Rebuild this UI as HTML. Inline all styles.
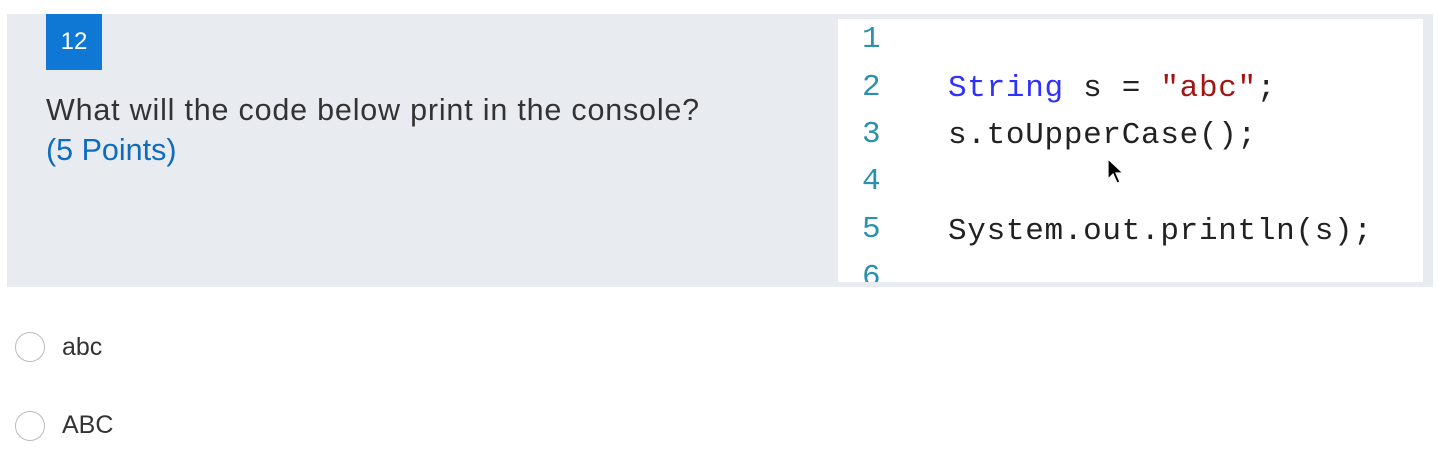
<!DOCTYPE html>
<html><head><style>
body{margin:0;width:1438px;height:476px;background:#fff;position:relative;overflow:hidden;font-family:"Liberation Sans",sans-serif}
.panel{position:absolute;left:7px;top:14px;width:1426px;height:273px;background:#e8ecf0}
.badge{position:absolute;left:46px;top:14px;width:56px;height:56px;background:#0f78d4;color:#fff;font-size:24px;line-height:56px;text-align:center}
.q{position:absolute;left:46px;top:90px;font-size:30.5px;color:#333;line-height:40px;letter-spacing:0.8px}
.q span{color:#0f6cbd;letter-spacing:0}
.code{position:absolute;left:838px;top:19px;width:585px;height:263px;background:#fff;overflow:hidden;font-family:"Liberation Mono",monospace;font-size:31px}
.ln{position:absolute;left:24px;color:#2b91af}
.tx{position:absolute;left:110px;color:#222;letter-spacing:0.7px}
.radio{position:absolute;left:15px;width:28px;height:28px;border:1px solid #bbb;border-radius:50%;background:#fff}
.opt{position:absolute;left:62px;font-size:25px;color:#333}
</style></head><body>
<div class="panel"></div>
<div class="badge">12</div>
<div class="q">What will the code below print in the console?<br><span>(5 Points)</span></div>
<div class="code">
<div class="ln" style="top:3px">1</div>
<div class="ln" style="top:51px">2</div><div class="tx" style="top:52px"><span style="color:#3030ff">String</span> s = <span style="color:#a31515">"abc"</span>;</div>
<div class="ln" style="top:98px">3</div><div class="tx" style="top:99px">s.toUpperCase();</div>
<div class="ln" style="top:145px">4</div>
<div class="ln" style="top:193px">5</div><div class="tx" style="top:195px">System.out.println(s);</div>
<div class="ln" style="top:241px">6</div>
<svg style="position:absolute;left:268px;top:138px" width="20" height="30" viewBox="0 0 20 30"><path d="M2 2 L2 22 L7 17 L11 26 L14 25 L10 16 L17 16 Z" fill="#000" stroke="#fff" stroke-width="1.2"/></svg>
</div>
<div class="radio" style="top:332px"></div><div class="opt" style="top:333px">abc</div>
<div class="radio" style="top:411px"></div><div class="opt" style="top:411px">ABC</div>
</body></html>
